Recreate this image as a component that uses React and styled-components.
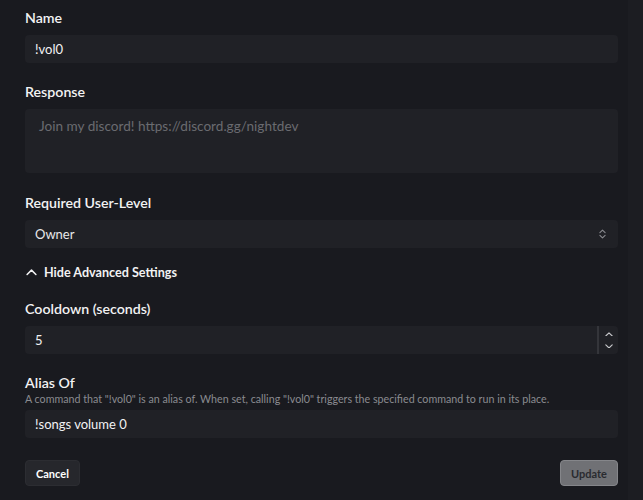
import React, { useState } from "react";
import styled, { createGlobalStyle } from "styled-components";

const GlobalStyle = createGlobalStyle`
  html, body {
    margin: 0;
    padding: 0;
    background: #191a1f;
  }
  body {
    font-family: "Lato", "Noto Sans", sans-serif;
    color: #ffffff;
  }
`;

const Page = styled.div`
  display: flex;
  width: 643px;
  height: 500px;
  background: #191a1f;
  overflow: hidden;
`;

const FormArea = styled.div`
  flex: 1;
  padding: 9px 10px 0 25px;
  display: flex;
  flex-direction: column;
`;

const Track = styled.div`
  width: 15px;
  background: #1c1d22;
`;

const Field = styled.div`
  display: flex;
  flex-direction: column;
  margin-bottom: ${(p) => p.$gap || 20}px;
`;

const Label = styled.label`
  font-size: 14.2px;
  font-weight: 600;
  line-height: 18px;
  color: #f2f2f3;
  margin-bottom: ${(p) => (p.$tight ? 0 : 8)}px;
`;

const Help = styled.div`
  font-size: 10.7px;
  line-height: 13px;
  color: #8a8b90;
  margin-bottom: 5px;
`;

const Input = styled.input`
  height: 28px;
  box-sizing: border-box;
  border: none;
  border-radius: 4px;
  background: #202126;
  color: #f2f2f3;
  font-family: inherit;
  font-size: 13px;
  padding: 0 10px;
  outline: none;
  width: 100%;
`;

const TextArea = styled.textarea`
  height: 64px;
  box-sizing: border-box;
  border: none;
  border-radius: 4px;
  background: #202126;
  color: #f2f2f3;
  font-family: inherit;
  font-size: 13.6px;
  padding: 9px 14px;
  resize: none;
  outline: none;
  &::placeholder {
    color: #6a6b70;
  }
`;

const SelectBox = styled.div`
  height: 28px;
  border-radius: 4px;
  background: #202126;
  display: flex;
  align-items: center;
  justify-content: space-between;
  padding: 0 12px 0 10px;
  font-size: 13px;
  color: #e8e8ea;
`;

const NumberBox = styled.div`
  height: 28px;
  border-radius: 4px;
  background: #202126;
  display: flex;
  align-items: stretch;
  > input {
    flex: 1;
    background: transparent;
  }
`;

const Stepper = styled.div`
  width: 19px;
  border-left: 2px solid #34353a;
  display: flex;
  flex-direction: column;
  align-items: center;
  justify-content: space-around;
  padding: 2px 0;
`;

const Toggle = styled.button`
  display: flex;
  align-items: center;
  gap: 7px;
  background: none;
  border: none;
  color: #f2f2f3;
  font-family: inherit;
  font-size: 12.6px;
  font-weight: 700;
  padding: 0 0 0 1px;
  margin: 0 0 20px;
  cursor: pointer;
`;

const Actions = styled.div`
  display: flex;
  justify-content: space-between;
`;

const Button = styled.button`
  height: 26px;
  padding: 0 10px;
  border-radius: 4px;
  font-family: inherit;
  font-size: 11px;
  font-weight: 700;
  border: 1px solid ${(p) => (p.$primary ? "#85868a" : "#2c2d32")};
  background: ${(p) => (p.$primary ? "#707175" : "#26272c")};
  color: ${(p) => (p.$primary ? "#2a2b30" : "#ffffff")};
  cursor: pointer;
`;

const Chevron = ({ up, size = 10, color = "#c8c9cc" }) => (
  <svg width={size} height={size * 0.6} viewBox="0 0 10 6" fill="none">
    <path
      d={up ? "M1 5 L5 1 L9 5" : "M1 1 L5 5 L9 1"}
      stroke={color}
      strokeWidth="1.4"
      strokeLinecap="round"
      strokeLinejoin="round"
    />
  </svg>
);

const UpDown = () => (
  <svg width="7" height="10" viewBox="0 0 8 11" fill="none">
    <path d="M1 4 L4 1 L7 4 M1 7 L4 10 L7 7" stroke="#8a8b90" strokeWidth="1.2" strokeLinecap="round" strokeLinejoin="round" />
  </svg>
);

export default function App() {
  const [name, setName] = useState("!vol0");
  const [cooldown, setCooldown] = useState("5");
  const [alias, setAlias] = useState("!songs volume 0");

  return (
    <Page>
      <GlobalStyle />
      <FormArea>
        <Field>
          <Label>Name</Label>
          <Input value={name} onChange={(e) => setName(e.target.value)} />
        </Field>
        <Field $gap={21}>
          <Label>Response</Label>
          <TextArea placeholder="Join my discord! https://discord.gg/nightdev" />
        </Field>
        <Field $gap={17}>
          <Label>Required User-Level</Label>
          <SelectBox>
            <span>Owner</span>
            <UpDown />
          </SelectBox>
        </Field>
        <Toggle>
          <Chevron up size={11} color="#f2f2f3" />
          Hide Advanced Settings
        </Toggle>
        <Field>
          <Label>Cooldown (seconds)</Label>
          <NumberBox>
            <Input value={cooldown} onChange={(e) => setCooldown(e.target.value)} />
            <Stepper>
              <Chevron up size={8} />
              <Chevron size={8} />
            </Stepper>
          </NumberBox>
        </Field>
        <Field $gap={22}>
          <Label $tight>Alias Of</Label>
          <Help>
            A command that "!vol0" is an alias of. When set, calling "!vol0" triggers the specified command to run in its place.
          </Help>
          <Input value={alias} onChange={(e) => setAlias(e.target.value)} />
        </Field>
        <Actions>
          <Button>Cancel</Button>
          <Button $primary>Update</Button>
        </Actions>
      </FormArea>
      <Track />
    </Page>
  );
}
